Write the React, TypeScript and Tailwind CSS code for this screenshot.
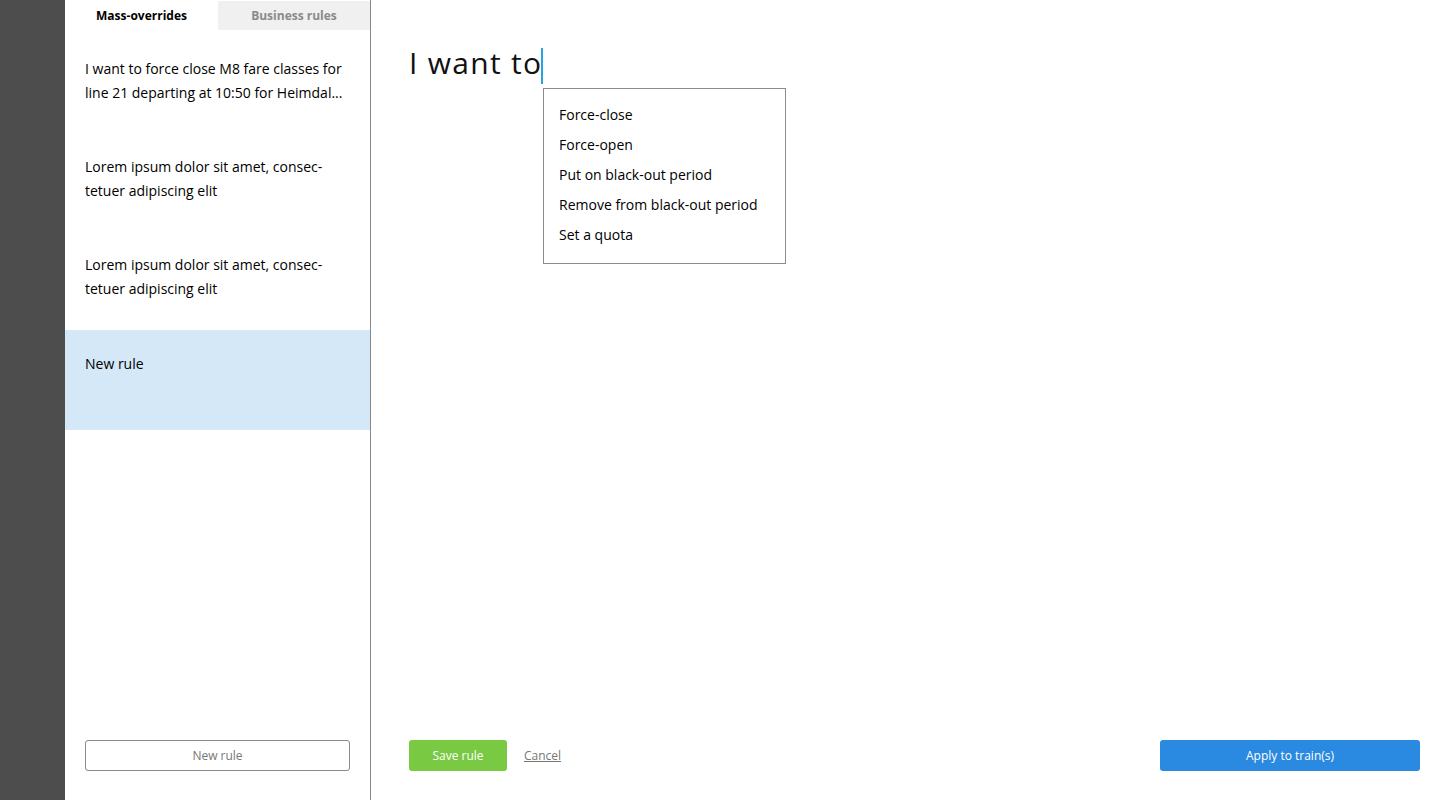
import React from "react";

const items = [
  "I want to force close M8 fare classes for line 21 departing at 10:50 for Heimdal...",
  "Lorem ipsum dolor sit amet, consec-tetuer adipiscing elit",
  "Lorem ipsum dolor sit amet, consec-tetuer adipiscing elit",
];

const menu = [
  "Force-close",
  "Force-open",
  "Put on black-out period",
  "Remove from black-out period",
  "Set a quota",
];

export default function App() {
  return (
    <div
      className="flex h-[800px] w-[1440px] overflow-hidden bg-white text-black"
      style={{ fontFamily: '"Open Sans", "Noto Sans", sans-serif' }}
    >
      <div className="w-[65px] shrink-0 bg-[#4d4d4d]" />
      <aside className="flex w-[306px] shrink-0 flex-col border-r border-[#888888]">
        <div className="flex h-[30px] pt-[1px] text-[12px] font-bold">
          <div className="flex w-[153px] items-center justify-center bg-white text-black">
            Mass-overrides
          </div>
          <div className="flex flex-1 items-center justify-center bg-[#f0f0f0] text-[#8a8a8a]">
            Business rules
          </div>
        </div>
        <div className="mt-[6px] flex flex-col">
          {items.map((t, i) => (
            <div key={i} className="h-[98px] px-5 pt-[21px] text-[14px] leading-[24px]">
              <p className="w-[262px]">{t}</p>
            </div>
          ))}
          <div className="h-[100px] bg-[#d5e8f8] px-5 pt-[22px] text-[14px] leading-[24px]">
            New rule
          </div>
        </div>
        <div className="flex-1" />
        <div className="px-5 pb-[29px]">
          <button className="h-[31px] w-full rounded-[3px] border border-[#8a8a8a] bg-white text-[12px] text-[#777777]">
            New rule
          </button>
        </div>
      </aside>
      <main className="relative flex flex-1 flex-col pl-[38px] pr-[20px]">
        <div className="mt-[48px] flex h-[36px] items-start">
          <span className="mt-[-3px] text-[30px] leading-[36px] tracking-[1.3px] text-[#111111]">
            I want to
          </span>
          <span className="ml-[-1px] h-[36px] w-[2px] bg-[#29a3df]" />
        </div>
        <div className="absolute left-[172px] top-[88px] w-[243px] border border-[#8c8c8c] bg-white pb-[13px] pl-[15px] pt-[11px]">
          {menu.map((m) => (
            <div key={m} className="h-[30px] text-[14px] leading-[30px]">
              {m}
            </div>
          ))}
        </div>
        <div className="flex-1" />
        <div className="flex items-center pb-[29px]">
          <button className="h-[31px] w-[98px] rounded-[3px] bg-[#7ac943] text-[12px] text-white">
            Save rule
          </button>
          <button className="ml-[17px] text-[12px] text-[#777777] underline">Cancel</button>
          <div className="flex-1" />
          <button className="h-[31px] w-[260px] rounded-[3px] bg-[#2a89e0] text-[12px] text-white">
            Apply to train(s)
          </button>
        </div>
      </main>
    </div>
  );
}
